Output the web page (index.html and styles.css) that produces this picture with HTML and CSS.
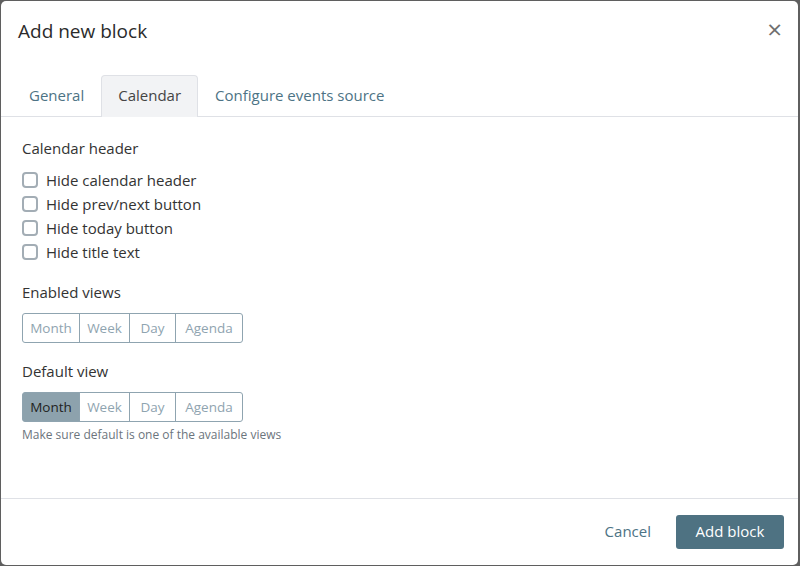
FILE: index.html
```html
<!DOCTYPE html>
<html>
<head>
<meta charset="utf-8">
<link rel="stylesheet" href="styles.css">
</head>
<body>
<div class="backdrop">
  <div class="modal">
    <div class="modal-header">
      <h1 class="modal-title">Add new block</h1>
      <span class="close">&times;</span>
    </div>
    <div class="tabs">
      <span class="tab">General</span>
      <span class="tab active">Calendar</span>
      <span class="tab">Configure events source</span>
    </div>
    <div class="modal-body">
      <div class="section-title">Calendar header</div>
      <div class="checks">
        <label class="check"><span class="box"></span>Hide calendar header</label>
        <label class="check"><span class="box"></span>Hide prev/next button</label>
        <label class="check"><span class="box"></span>Hide today button</label>
        <label class="check"><span class="box"></span>Hide title text</label>
      </div>
      <div class="section-title">Enabled views</div>
      <div class="btn-group">
        <span class="seg s-month">Month</span><span class="seg s-week">Week</span><span class="seg s-day">Day</span><span class="seg s-agenda">Agenda</span>
      </div>
      <div class="section-title second">Default view</div>
      <div class="btn-group">
        <span class="seg s-month on">Month</span><span class="seg s-week">Week</span><span class="seg s-day">Day</span><span class="seg s-agenda">Agenda</span>
      </div>
      <div class="help">Make sure default is one of the available views</div>
    </div>
    <div class="modal-footer">
      <span class="cancel">Cancel</span>
      <span class="primary">Add block</span>
    </div>
  </div>
</div>
</body>
</html>
```
FILE: styles.css
```css
* { box-sizing: border-box; }
html, body { margin: 0; padding: 0; }
body {
  background: #5f5f5f;
  font-family: "Open Sans", "Lato", sans-serif;
  color: #333;
  width: 800px;
  height: 566px;
  overflow: hidden;
}
.backdrop {
  padding: 1px 2px 1px 1px;
  height: 566px;
}
.modal {
  background: #fff;
  border-radius: 5px;
  height: 564px;
  display: flex;
  flex-direction: column;
}
.modal-header {
  display: flex;
  justify-content: space-between;
  align-items: flex-start;
  padding: 17px 16px 0 17px;
  height: 74px;
}
.modal-title {
  margin: 0;
  font-size: 19px;
  font-weight: 500;
  line-height: 26px;
  color: #2b2b2b;
}
.close {
  font-size: 26px;
  line-height: 22px;
  color: #6f6f6f;
  margin-top: 0;
}
.tabs {
  display: flex;
  border-bottom: 1px solid #dfe1e6;
  padding-left: 11px;
  height: 42px;
}
.tab {
  font-size: 15px;
  color: #4d7385;
  padding: 0 16px;
  line-height: 38px;
  border: 1px solid transparent;
  border-bottom: none;
  border-radius: 4px 4px 0 0;
  height: 42px;
  margin-bottom: -1px;
}
.tab.active {
  background: #f2f3f5;
  border-color: #dfe1e6;
  color: #444;
}
.modal-body {
  flex: 1;
  padding: 21px 21px 0 21px;
  border-bottom: 1px solid #dfe1e6;
}
.section-title {
  font-size: 15px;
  color: #333;
  line-height: 20px;
}
.section-title.second { margin-top: 18px; }
.checks {
  display: flex;
  flex-direction: column;
  margin: 10px 0 18px;
}
.check {
  display: flex;
  align-items: center;
  font-size: 15px;
  color: #333;
  height: 24px;
}
.box {
  width: 16px;
  height: 16px;
  border: 2px solid #a3adb5;
  border-radius: 4px;
  margin-right: 8px;
}
.btn-group {
  display: flex;
  margin-top: 11px;
  height: 30px;
}
.seg {
  font-size: 13.5px;
  color: #8fa4b0;
  border: 1px solid #8fa4b0;
  display: flex;
  align-items: center;
  justify-content: center;
  margin-left: -1px;
}
.seg.s-month { width: 58px; margin-left: 0; border-radius: 3px 0 0 3px; }
.seg.s-week { width: 51px; }
.seg.s-day { width: 47px; }
.seg.s-agenda { width: 68px; border-radius: 0 3px 3px 0; }
.seg.on { background: #8da2ad; color: #222; }
.help {
  font-size: 12px;
  color: #6c757d;
  margin-top: 4px;
}
.modal-footer {
  height: 66px;
  display: flex;
  align-items: center;
  justify-content: flex-end;
  padding: 0 14px 0 0;
}
.cancel {
  font-size: 15px;
  color: #4d7385;
  margin-right: 25px;
  margin-bottom: 2px;
}
.primary {
  font-size: 15px;
  color: #fff;
  background: #4e7282;
  border-radius: 3px;
  width: 108px;
  height: 34px;
  display: flex;
  align-items: center;
  justify-content: center;
  padding-bottom: 2px;
}
```
